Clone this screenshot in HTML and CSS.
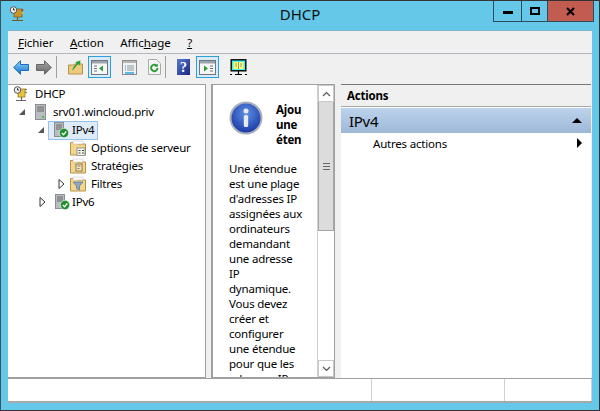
FILE: index.html
```html
<!DOCTYPE html>
<html lang="fr">
<head>
<meta charset="utf-8">
<title>DHCP</title>
<link rel="stylesheet" href="styles.css">
</head>
<body>
<div class="window">
  <header class="titlebar">
    <div class="title-left">
      <svg class="app-icon" width="16" height="16" viewBox="0 0 16 16"><rect x="5" y="3" width="8" height="8" fill="#c9962c" stroke="#7a5a18" stroke-width=".7"/><circle cx="4.5" cy="4" r="3.3" fill="#eee" stroke="#555"/><path d="M4.5 2.2V4H6" stroke="#333" fill="none"/><circle cx="13.5" cy="4" r="1" fill="#c33"/><circle cx="13.5" cy="7" r="1" fill="#dc3"/><path d="M8.5 11v3M3 14.5h11" stroke="#7a5a18" stroke-width="1.2"/></svg>
    </div>
    <div class="title-text">DHCP</div>
    <div class="controls">
      <div class="ctl ctl-min"><span class="min-glyph"></span></div>
      <div class="ctl ctl-max"><span class="max-glyph"></span></div>
      <div class="ctl ctl-close"><svg width="9" height="9" viewBox="0 0 9 9"><path d="M1 1l7 7M8 1l-7 7" stroke="#000" stroke-width="2"/></svg></div>
    </div>
  </header>
  <div class="client">
    <nav class="menubar">
      <span class="menu"><u>F</u>ichier</span>
      <span class="menu"><u>A</u>ction</span>
      <span class="menu">Affic<u>h</u>age</span>
      <span class="menu"><u>?</u></span>
    </nav>
    <div class="toolbar">
      <span class="tool"><svg width="16" height="15" viewBox="0 0 16 15"><defs><linearGradient id="b" x1="0" y1="0" x2="0" y2="1"><stop offset="0" stop-color="#8fd3fb"/><stop offset="1" stop-color="#1672c9"/></linearGradient></defs><path d="M.7 7.500L7.500.7v3.800h8v6h-8v3.800z" fill="url(#b)" stroke="#1a6cb8"/></svg></span>
      <span class="tool tool-fwd"><svg width="16" height="15" viewBox="0 0 16 15"><defs><linearGradient id="g" x1="0" y1="0" x2="0" y2="1"><stop offset="0" stop-color="#a6a6a6"/><stop offset="1" stop-color="#666"/></linearGradient></defs><path d="M15.300 7.500L8.500.7v3.800h-8v6h8v3.800z" fill="url(#g)" stroke="#666"/></svg></span>
      <span class="sep"></span>
      <span class="tool tool-up"><svg width="15" height="16" viewBox="0 0 15 16"><path d="M.5 6h5l1-1h8v10H.5z" fill="#eccb7c" stroke="#b8924a"/><path d="M4.500 12C4.500 8 6.500 6 8.500 5l-1-2 5-1.500-.5 5L10.500 5C8.500 6.500 6.500 9 4.500 12z" fill="#2f9e3a"/></svg></span>
      <span class="tool tool-on tool-show"><svg width="17" height="15" viewBox="0 0 17 15"><rect x=".5" y=".5" width="16" height="14" fill="#f6f6f6" stroke="#6d7680"/><rect x="1" y="1" width="15" height="2.500" fill="#9aa4ad"/><path d="M3 6h3M3 8.500h3M3 11h3" stroke="#6d7680" stroke-width="1.200"/><path d="M12 5.500v6L8 8.500z" fill="#2f9e3a"/></svg></span>
      <span class="tool tool-doc"><svg width="15" height="15" viewBox="0 0 15 15"><rect x=".5" y=".5" width="14" height="14" fill="#f2f2f2" stroke="#8c8c8c"/><rect x="1" y="1" width="13" height="2" fill="#b5b5b5"/><path d="M5 6h7M5 8h7M5 10h7" stroke="#8a9aa8"/><path d="M3 6h1M3 8h1M3 10h1" stroke="#3d9ad8"/><path d="M3 13h9" stroke="#2ea5e0" stroke-width="1.500"/></svg></span>
      <span class="tool tool-ref"><svg width="13" height="16" viewBox="0 0 13 16"><path d="M.5.500h8l4 4v11H.5z" fill="#f5f5f5" stroke="#aaa"/><path d="M9.500 9a3.200 3.200 0 1 1-1-2.400" fill="none" stroke="#2f9e3a" stroke-width="2"/><path d="M9.800 4.500v3.300H6.500z" fill="#2f9e3a"/></svg></span>
      <span class="sep"></span>
      <span class="tool tool-help"><svg width="13" height="16" viewBox="0 0 13 16"><defs><linearGradient id="h" x1="0" y1="0" x2="1" y2="1"><stop offset="0" stop-color="#5a7ad0"/><stop offset="1" stop-color="#17277f"/></linearGradient></defs><rect width="13" height="16" fill="url(#h)"/><text class="help-q" x="6.500" y="13">?</text></svg></span>
      <span class="tool tool-on tool-act"><svg width="17" height="15" viewBox="0 0 17 15"><rect x=".5" y=".5" width="16" height="14" fill="#f6f6f6" stroke="#6d7680"/><rect x="1" y="1" width="15" height="2.500" fill="#9aa4ad"/><path d="M11 6h3M11 8.500h3M11 11h3" stroke="#6d7680" stroke-width="1.200"/><path d="M5 5.500v6L9 8.500z" fill="#2f9e3a"/></svg></span>
      <span class="tool tool-mon"><svg width="17" height="17" viewBox="0 0 17 17"><rect x="1.200" y=".8" width="14.600" height="11" fill="#4ee" stroke="#000" stroke-width="1.400"/><rect x="3.500" y="3" width="10" height="7" fill="#ff6"/><path d="M8.500 3v7M5 5h2M5 7h2M10 5h2M10 7h2" stroke="#779" stroke-width=".8"/><path d="M8.500 12v3M5 15.500h7" stroke="#000" stroke-width="1.200"/><path d="M0 15.500h2M15 15.500h2" stroke="#000"/></svg></span>
    </div>
    <main class="panes">
      <section class="tree">
        <div class="row row-0">
          <svg class="ic" width="16" height="16" viewBox="0 0 16 16"><rect x="5" y="3" width="7" height="8" fill="#e9c53a" stroke="#8a6d16" stroke-width=".7"/><circle cx="4.500" cy="4" r="3.300" fill="#eee" stroke="#555"/><path d="M4.500 2.200V4H6" stroke="#333" fill="none"/><path d="M12 3l2 1M12 6l2 1" stroke="#555"/><path d="M8.500 11v3M3 14.500h10" stroke="#666" stroke-width="1.200"/></svg>
          <span class="label">DHCP</span>
        </div>
        <div class="row row-1">
          <span class="exp-open"></span>
          <svg class="ic" width="11" height="16" viewBox="0 0 11 16"><rect x=".5" y=".5" width="10" height="15" fill="#b9bdc1" stroke="#8a8f93"/><path d="M2 3h7M2 5h7M2 7h7" stroke="#666"/><rect x="7" y="12" width="2" height="2" fill="#46c246"/></svg>
          <span class="label lb-srv">srv01.wincloud.priv</span>
        </div>
        <div class="row row-2">
          <span class="exp-open"></span>
          <div class="selected">
            <svg class="ic" width="15" height="16" viewBox="0 0 15 16"><rect x=".5" y=".5" width="9" height="14" fill="#b9bdc1" stroke="#8a8f93"/><path d="M2 3h6M2 5h6M2 7h6" stroke="#666"/><circle cx="10" cy="11" r="4.700" fill="#1f8f2d" stroke="#fff" stroke-width=".6"/><path d="M7.800 11l1.700 1.700 2.800-3.200" stroke="#fff" fill="none" stroke-width="1.300"/></svg>
            <span class="label">IPv4</span>
          </div>
        </div>
        <div class="row row-3">
          <svg class="ic" width="16" height="16" viewBox="0 0 16 16"><path d="M.5 2.500h6l1 1.500h8v11H.5z" fill="#f3d68e" stroke="#b8924a"/><rect x="3" y="1" width="10" height="3" fill="#fff" stroke="#bbb" stroke-width=".5"/><rect x="7" y="8" width="8" height="7.500" fill="#f4f4f4" stroke="#777" stroke-width=".7"/><path d="M8.500 10.500h2M8.500 13h2M12 10.500h2M12 13h2" stroke="#444"/></svg>
          <span class="label">Options de serveur</span>
        </div>
        <div class="row row-3">
          <svg class="ic" width="16" height="16" viewBox="0 0 16 16"><path d="M.5 2.500h6l1 1.500h8v11H.5z" fill="#f3d68e" stroke="#b8924a"/><rect x="3" y="1" width="10" height="3" fill="#fff" stroke="#bbb" stroke-width=".5"/><rect x="6" y="6" width="6" height="7" fill="#f3e7c4" stroke="#8a7a55"/><path d="M7.500 8h3M7.500 10.500h2" stroke="#8a7a55"/></svg>
          <span class="label">Stratégies</span>
        </div>
        <div class="row row-3b">
          <svg class="exp-closed" width="7" height="10" viewBox="0 0 7 10"><path d="M1 .5v9L6 5z" fill="#fff" stroke="#333"/></svg>
          <svg class="ic" width="16" height="16" viewBox="0 0 16 16"><path d="M.5 2.500h6l1 1.500h8v11H.5z" fill="#f3d68e" stroke="#b8924a"/><rect x="3" y="1" width="10" height="3" fill="#fff" stroke="#bbb" stroke-width=".5"/><path d="M3 6h10L9.500 10v4l-3-1.500V10z" fill="#8fa6c2" stroke="#5d738f" stroke-width=".7"/></svg>
          <span class="label">Filtres</span>
        </div>
        <div class="row row-2b">
          <svg class="exp-closed" width="7" height="10" viewBox="0 0 7 10"><path d="M1 .5v9L6 5z" fill="#fff" stroke="#333"/></svg>
          <svg class="ic" width="15" height="16" viewBox="0 0 15 16"><rect x=".5" y=".5" width="9" height="14" fill="#b9bdc1" stroke="#8a8f93"/><path d="M2 3h6M2 5h6M2 7h6" stroke="#666"/><circle cx="10" cy="11" r="4.700" fill="#1f8f2d" stroke="#fff" stroke-width=".6"/><path d="M7.800 11l1.700 1.700 2.800-3.200" stroke="#fff" fill="none" stroke-width="1.300"/></svg>
          <span class="label">IPv6</span>
        </div>
      </section>
      <section class="center">
        <div class="center-body">
          <div class="info-head">
            <svg class="info-icon" width="34" height="34" viewBox="0 0 34 34"><defs><radialGradient id="i" cx=".5" cy=".35" r=".7"><stop offset="0" stop-color="#5f8fe8"/><stop offset="1" stop-color="#13309c"/></radialGradient></defs><circle cx="17" cy="17" r="15.500" fill="url(#i)" stroke="#aab0bc" stroke-width="2"/><circle cx="17" cy="10" r="2.500" fill="#e8eaf2"/><rect x="14.800" y="14" width="4.400" height="12" rx="1.500" fill="#e8eaf2"/></svg>
            <h1 class="info-title">Ajou<br>une<br>éten</h1>
          </div>
          <p class="info-text">Une étendue<br>est une plage<br>d'adresses IP<br>assignées aux<br>ordinateurs<br>demandant<br>une adresse<br>IP<br>dynamique.<br>Vous devez<br>créer et<br>configurer<br>une étendue<br>pour que les<br>adresses IP</p>
        </div>
        <div class="scrollbar">
          <div class="sb-btn"><svg width="9" height="6" viewBox="0 0 9 6"><path d="M1 5l3.500-3.500L8 5" fill="none" stroke="#555" stroke-width="1.200"/></svg></div>
          <div class="sb-thumb"><span class="grip"></span></div>
          <div class="sb-track"></div>
          <div class="sb-btn"><svg width="9" height="6" viewBox="0 0 9 6"><path d="M1 1l3.500 3.500L8 1" fill="none" stroke="#555" stroke-width="1.200"/></svg></div>
        </div>
      </section>
      <section class="actions">
        <div class="act-head">Actions</div>
        <div class="act-group"><span>IPv4</span><span class="tri-up"></span></div>
        <div class="act-item"><span>Autres actions</span><span class="tri-right"></span></div>
      </section>
    </main>
    <footer class="status">
      <div class="st st-a"></div>
      <div class="st st-b"></div>
      <div class="st st-c"></div>
    </footer>
  </div>
</div>
</body>
</html>
```
FILE: styles.css
```css
* { box-sizing: border-box; }
html, body { margin: 0; padding: 0; }
body { width: 600px; height: 411px; overflow: hidden; font-family: "Noto Sans", sans-serif; font-size: 11.5px; letter-spacing: -0.2px; color: #000; }
.window { width: 600px; height: 411px; background: #65c8e9; border: 1px solid #333; border-width: 1px 1px 1px 0; border-left: 1px solid #3a5560; display: flex; flex-direction: column; }
.titlebar { height: 29px; display: grid; grid-template-columns: 1fr auto 1fr; flex: none; }
.title-left { padding: 5px 0 0 8px; }
.app-icon { display: block; }
.title-text { font-size: 15px; letter-spacing: 0; line-height: 27px; color: #111; }
.controls { display: flex; justify-content: flex-end; align-items: flex-start; padding-right: 5px; }
.ctl { height: 21px; border: 1px solid #2f4a58; border-top: 0; border-left-width: 0; display: flex; align-items: center; justify-content: center; }
.ctl-min { width: 29px; border-left-width: 1px; }
.ctl-max { width: 26px; }
.ctl-close { width: 46px; background: #c25b50; }
.min-glyph { width: 10px; height: 3px; background: #000; margin-top: 3px; }
.max-glyph { width: 10px; height: 8px; border: 2px solid #000; }
.client { flex: 1; margin: 0 7px 7px 7px; display: flex; flex-direction: column; background: #f0f0f0; border-top: 1px solid #7fb2cc; border-bottom: 2px solid #a8a8a8; min-height: 0; }
.menubar { height: 23px; display: flex; align-items: center; padding-left: 10px; gap: 16.5px; background: #f0f0f0; border-bottom: 1px solid #b5b5c0; flex: none; line-height: 1; }
.menu { font-size: 11.5px; letter-spacing: -0.05px; padding-top: 1px; }
.toolbar { height: 30px; flex: none; display: flex; align-items: center; padding: 0 0 4px 5px; background: #f0f0f0; }
.tool { display: flex; align-items: center; justify-content: center; height: 22px; }
.tool svg { display: block; }
.tool-fwd { margin-left: 7px; }
.sep { width: 1px; height: 22px; background: #a0a0a0; margin: 0 11px 0 4px; }
.tool-on { width: 23px; background: #d9ebf9; border: 1px solid #2d9fdb; }
.tool-show { margin-left: 5px; }
.tool-doc { margin-left: 11px; }
.tool-ref { margin-left: 11px; }
.tool-act { margin-left: 6px; }
.tool-mon { margin-left: 11px; }
.help-q { font-family: "Liberation Serif", serif; font-size: 14px; font-weight: bold; fill: #fff; text-anchor: middle; }
.panes { flex: 1; min-height: 0; display: flex; gap: 5px; padding-right: 1px; background: #f0f0f0; }
.tree { width: 198px; background: #fff; border: 1px solid #a0a0a0; border-left: 0; overflow: hidden; }
.row { height: 18px; display: flex; align-items: center; white-space: nowrap; }
.ic { display: block; flex: none; }
.label { line-height: 16px; }
.row-0 { padding-left: 5px; }
.row-0 .label { margin-left: 6px; }
.row-1 { padding-left: 11px; }
.row-1 .ic { margin-left: 10px; }
.row-1 .label { margin-left: 7px; }
.row-2 { padding-left: 30px; }
.selected { display: flex; align-items: center; flex: none; width: 50px; height: 19px; margin-left: 4px; padding-left: 5px; background: #deebf8; border: 1px solid #99c0e6; }
.selected .label { margin-left: 3px; }
.row-3 { padding-left: 62px; }
.row-3 .label { margin-left: 5px; }
.row-3b { padding-left: 50px; }
.row-3b .ic { margin-left: 5px; }
.row-3b .label { margin-left: 5px; }
.row-2b { padding-left: 31px; }
.row-2b .ic { margin-left: 9px; }
.row-2b .label { margin-left: 2px; }
.exp-open { flex: none; width: 0; height: 0; border-style: solid; border-width: 0 0 6px 6px; border-color: transparent transparent #555 transparent; }
.exp-closed { display: block; flex: none; }
.center { width: 124px; margin-right: 1px; background: #fff; border: 1px solid #a0a0a0; border-left-width: 2px; display: flex; overflow: hidden; }
.center-body { flex: 1; min-width: 0; overflow: hidden; padding-left: 16px; }
.info-head { display: flex; padding-top: 16px; }
.info-icon { flex: none; display: block; }
.info-title { margin: 0 0 0 13px; padding-top: 1px; font-size: 11.5px; font-weight: bold; line-height: 15px; }
.info-text { margin: 14px 0 0 0; line-height: 15px; white-space: nowrap; }
.scrollbar { width: 17px; flex: none; display: flex; flex-direction: column; background: #fff; border-left: 1px solid #d0d0d0; }
.sb-btn { height: 17px; flex: none; background: #fff; border: 1px solid #c8c8c8; display: flex; align-items: center; justify-content: center; }
.sb-thumb { height: 129px; flex: none; background: #dcdcdc; border: 1px solid #a6a6a6; border-top: 0; display: flex; align-items: center; justify-content: center; }
.grip { width: 7px; height: 7px; border-top: 1px solid #666; border-bottom: 1px solid #666; background: linear-gradient(#dcdcdc 2px, #666 2px, #666 3px, #dcdcdc 3px); }
.sb-track { flex: 1; }
.actions { flex: 1; min-width: 0; background: #fff; border-top: 1px solid #777; display: flex; flex-direction: column; }
.act-head { height: 22px; flex: none; background: #f0f0f0; border-bottom: 1px solid #a8a8a8; font-weight: bold; padding-left: 6px; line-height: 22px; }
.act-group { height: 25px; flex: none; background: linear-gradient(#bdd3ec, #9db8d7); margin-top: 1px; display: flex; align-items: center; justify-content: space-between; padding: 0 9px 0 8px; font-size: 15px; letter-spacing: -0.3px; }
.tri-up { width: 0; height: 0; border-style: solid; border-width: 0 5px 5px 5px; border-color: transparent transparent #000 transparent; }
.act-item { display: flex; align-items: center; justify-content: space-between; padding: 0 9px 2px 32px; height: 22px; }
.tri-right { width: 0; height: 0; border-style: solid; border-width: 5px 0 5px 5px; border-color: transparent transparent transparent #000; }
.status { height: 23px; flex: none; display: flex; background: #fff; border-top: 1px solid #a0a0a0; }
.st { border-right: 1px solid #d0d0d0; }
.st-a { width: 364px; }
.st-b { width: 133px; }
.st-c { flex: 1; }
```
